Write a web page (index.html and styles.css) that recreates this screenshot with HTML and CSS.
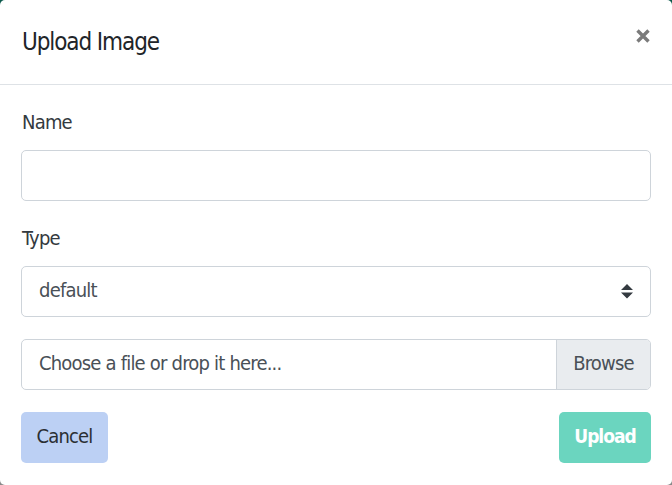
FILE: index.html
```html
<!DOCTYPE html>
<html lang="en">
<head>
<meta charset="utf-8">
<title>Upload Image</title>
<link rel="stylesheet" href="styles.css">
</head>
<body>
<div class="modal">
  <div class="modal-header">
    <h5 class="modal-title">Upload Image</h5>
    <button class="close" type="button" aria-label="Close">
      <svg width="16" height="14" viewBox="0 0 16 14"><path d="M2.5 1.5 L13.5 12.5 M13.5 1.5 L2.5 12.5" stroke="#7b7b7b" stroke-width="3.4" stroke-linecap="butt"/></svg>
    </button>
  </div>
  <div class="modal-body">
    <div class="form-group">
      <label class="label">Name</label>
      <div class="input"></div>
    </div>
    <div class="form-group">
      <label class="label">Type</label>
      <div class="input select">
        <span class="select-text">default</span>
        <svg class="caret" width="12" height="15" viewBox="0 0 12 15"><path d="M6 0 L12 6 L0 6 Z M0 8.5 L12 8.5 L6 14.5 Z" fill="#343a40"/></svg>
      </div>
    </div>
    <div class="file">
      <span class="file-label">Choose a file or drop it here...</span>
      <span class="browse">Browse</span>
    </div>
    <div class="actions">
      <button class="btn btn-cancel" type="button">Cancel</button>
      <button class="btn btn-upload" type="button">Upload</button>
    </div>
  </div>
</div>
</body>
</html>
```

FILE: styles.css
```css
html, body {
  margin: 0;
  padding: 0;
}
body {
  width: 672px;
  height: 485px;
  background: linear-gradient(#0d5a4c 0%, #3a6b62 50%, #8a8a8a 100%);
  font-family: "DejaVu Sans Condensed", "DejaVu Sans", sans-serif;
  font-stretch: condensed;
  color: #212529;
  letter-spacing: -0.8px;
}
.modal {
  background: #fff;
  border-radius: 5px;
  height: 485px;
  box-sizing: border-box;
}
.modal-header {
  height: 84px;
  border-bottom: 1px solid #dee2e6;
  display: flex;
  align-items: center;
  justify-content: space-between;
  padding: 0 22px 0 22px;
}
.modal-title {
  margin: 0;
  font-size: 24px;
  font-weight: 400;
  line-height: 30px;
  letter-spacing: -1.1px;
  color: #212529;
}
.close {
  border: 0;
  background: none;
  padding: 0;
  width: 16px;
  height: 14px;
  display: flex;
  position: relative;
  top: -6px;
  left: 1px;
}
.modal-body {
  padding: 22px 21px 0 21px;
  display: flex;
  flex-direction: column;
  gap: 22px;
}
.label {
  display: block;
  font-size: 20px;
  line-height: 30px;
  color: #343a40;
  margin-bottom: 13px;
  padding-left: 1px;
}
.input {
  height: 51px;
  box-sizing: border-box;
  border: 1px solid #ced4da;
  border-radius: 5px;
}
.select {
  display: flex;
  align-items: center;
  justify-content: space-between;
  padding: 0 17px 0 17px;
  font-size: 20px;
  color: #495057;
}
.select-text {
  padding-bottom: 4px;
}
.file {
  height: 51px;
  box-sizing: border-box;
  border: 1px solid #ced4da;
  border-radius: 5px;
  display: flex;
  overflow: hidden;
  font-size: 20px;
  color: #495057;
}
.file-label {
  flex: 1;
  display: flex;
  align-items: center;
  padding: 0 0 4px 17px;
}
.browse {
  width: 93px;
  background: #e9ecef;
  border-left: 1px solid #ced4da;
  display: flex;
  align-items: center;
  justify-content: center;
  padding-bottom: 4px;
}
.actions {
  display: flex;
  justify-content: space-between;
}
.btn {
  height: 51px;
  border: 0;
  border-radius: 5px;
  font-family: inherit;
  font-stretch: condensed;
  font-size: 20px;
  letter-spacing: -0.8px;
  padding: 0 0 4px 0;
}
.btn-cancel {
  width: 87px;
  background: #bcd0f4;
  color: #2b2f33;
}
.btn-upload {
  width: 92px;
  background: #6bd5bf;
  color: #fff;
  font-weight: 700;
  font-size: 19px;
  letter-spacing: -1px;
}
```
